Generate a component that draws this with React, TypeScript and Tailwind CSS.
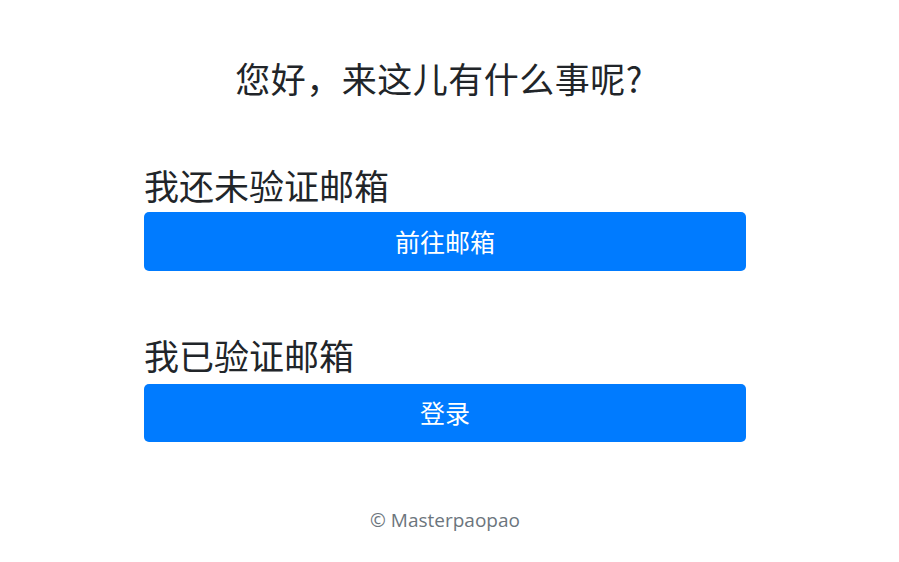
export default function App() {
  const font = { fontFamily: '"Noto Sans CJK SC", "Noto Sans", sans-serif' };
  return (
    <div className="min-h-screen bg-white text-[#212529]" style={font}>
      <div className="w-[890px] flex flex-col items-center">
        <h1 className="mt-[57px] pr-[12px] text-[35px] leading-[42px] tracking-[0.5px] font-normal">您好，来这儿有什么事呢?</h1>

        <div className="mt-[65px] w-[602px] flex flex-col">
          <h2 className="text-[35px] leading-[42px] font-normal">我还未验证邮箱</h2>
          <button className="mt-[6px] h-[59px] w-full rounded-[5px] bg-[#007bff] text-white text-[25px]">
            前往邮箱
          </button>

          <h2 className="mt-[63px] text-[35px] leading-[42px] font-normal">我已验证邮箱</h2>
          <button className="mt-[8px] h-[58px] w-full rounded-[5px] bg-[#007bff] text-white text-[25px]">
            登录
          </button>
        </div>

        <p
          className="mt-[64px] text-[19px] leading-[28px] text-[#6c757d]"
          style={{ fontFamily: '"Open Sans", "Noto Sans", sans-serif' }}
        >
          © Masterpaopao
        </p>
      </div>
    </div>
  );
}
